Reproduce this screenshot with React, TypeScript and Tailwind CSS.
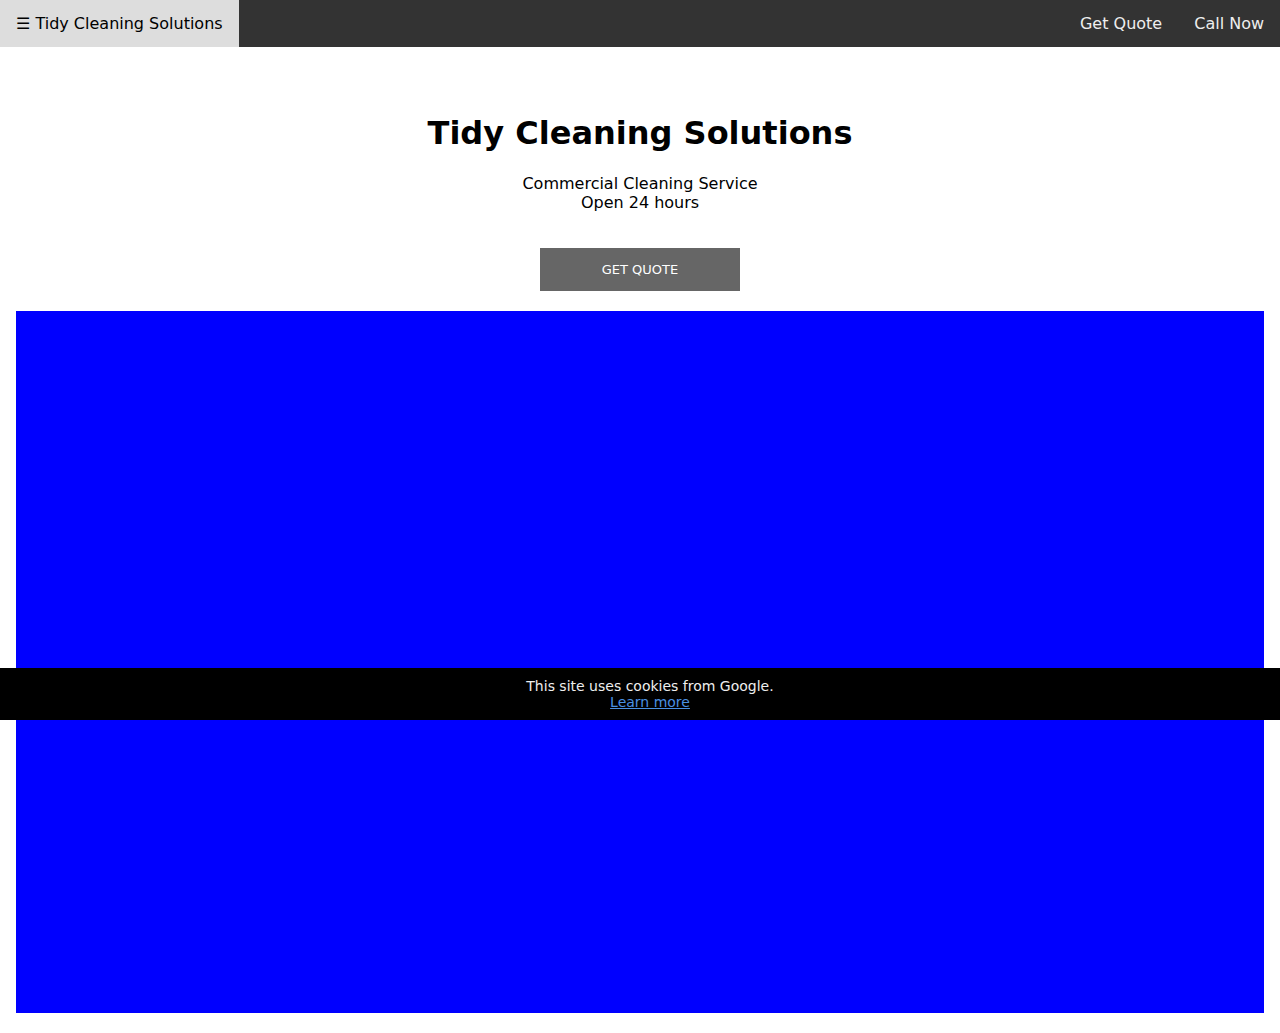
export default function App() {
  return (
    <div className="relative min-h-[1033px] bg-white font-['DejaVu_Sans',sans-serif] text-black">
      {/* top bar */}
      <nav className="flex h-[47px] items-stretch justify-between bg-[#333333]">
        <div className="flex items-center bg-[#dddddd] px-4 text-base">☰ Tidy Cleaning Solutions</div>
        <div className="flex items-center text-base text-[#eeeeee]">
          <a className="px-4">Get Quote</a>
          <a className="px-4">Call Now</a>
        </div>
      </nav>

      {/* hero */}
      <header className="flex flex-col items-center pt-[68px] text-center">
        <h1 className="text-[32px] leading-[37px] font-bold">Tidy Cleaning Solutions</h1>
        <p className="mt-[22px] text-base leading-[19px]">
          Commercial Cleaning Service
          <br />
          Open 24 hours
        </p>
        <button className="mt-[36px] h-[43px] w-[200px] bg-[#666666] text-[13px] text-white uppercase">
          Get Quote
        </button>
      </header>

      <div className="mx-4 mt-5 h-[702px] bg-[#0000ff]" />

      {/* cookie notice */}
      <div className="absolute top-[668px] right-0 left-0 flex h-[52px] flex-col items-center justify-center bg-black pl-5 text-sm leading-4 text-[#eeeeee]">
        <span>This site uses cookies from Google.</span>
        <a className="text-[#4a90e2] underline">Learn more</a>
      </div>
    </div>
  );
}
